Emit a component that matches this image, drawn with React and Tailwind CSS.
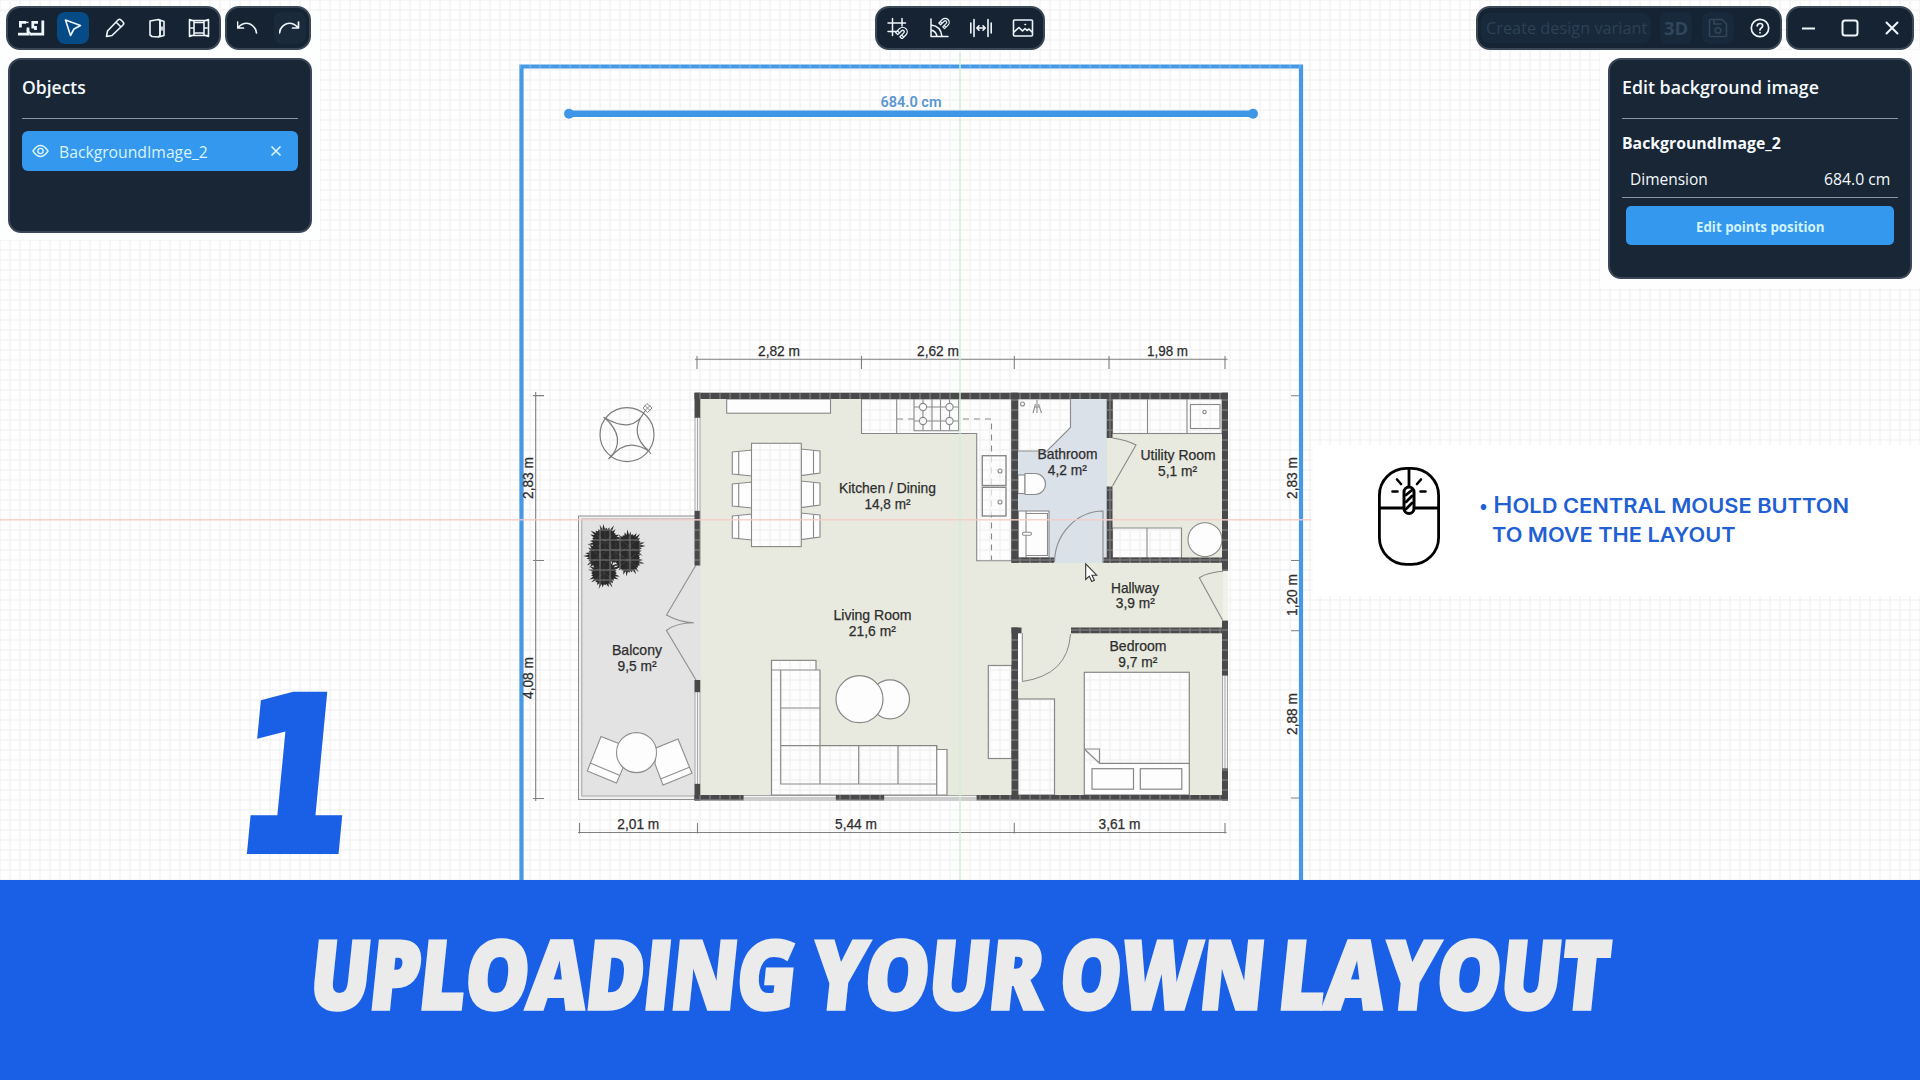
import React, { useLayoutEffect, useRef, useState } from 'react';

/* Text squeezed or stretched horizontally to a given width. */
function Fit({ w, className = '', children }) {
  const ref = useRef(null);
  const [s, setS] = useState(1);
  useLayoutEffect(() => {
    const n = ref.current.offsetWidth;
    if (n) setS(w / n);
  }, [w]);
  return (
    <span className="inline-block shrink-0 whitespace-nowrap" style={{ width: w }}>
      <span ref={ref} className={'inline-block origin-left whitespace-nowrap ' + className} style={{ transform: `scaleX(${s})` }}>
        {children}
      </span>
    </span>
  );
}

function Icon({ size = 22, sw = 1.6, children }) {
  return (
    <svg width={size} height={size} viewBox="0 0 22 22" fill="none" stroke="#eef6fb" strokeWidth={sw} strokeLinecap="round" strokeLinejoin="round">
      {children}
    </svg>
  );
}

function Cell({ on, dim, children }) {
  return (
    <div className="flex h-8 w-[42px] shrink-0 items-center justify-center">
      <div className={'flex h-8 w-8 items-center justify-center rounded-lg ' + (on ? 'bg-[#064a86]' : dim ? 'bg-[#1b2a3a]' : '')}>{children}</div>
    </div>
  );
}

function Bar({ className = '', children }) {
  return (
    <div className={'flex h-11 shrink-0 items-center rounded-[14px] border-2 border-[#3a4757] bg-[#152332] ' + className}>{children}</div>
  );
}

function Walls() {
  const walls = [
    [694.5, 392.7, 533.5, 6.3], [694.5, 392.7, 5.8, 25], [694.5, 511, 5.8, 54.5], [694.5, 680, 5.8, 12], [694.5, 784, 5.8, 16.5],
    [694.5, 795, 49, 5.5], [836, 795, 48, 5.5], [976.7, 795, 251.3, 5.5],
    [1222, 392.7, 6, 178], [1222, 620.5, 6, 55], [1222, 768.5, 6, 32],
    [1011.5, 392.7, 6.5, 170], [1011.5, 557.5, 42.5, 5.3], [1103.5, 557.5, 119, 5.3],
    [1106.7, 399, 5.8, 39], [1106.7, 486.5, 5.8, 76],
    [1011.5, 627.5, 10, 5.8], [1071, 627.5, 151, 5.8], [1011.5, 627.5, 6.5, 170],
  ];
  return <g fill="#49494b">{walls.map(([x, y, w, h], i) => <rect key={i} x={x} y={y} width={w} height={h} />)}</g>;
}

function Plant() {
  const bushes = [[605, 541, 18], [629, 546, 17], [600, 556, 17], [628, 560, 17], [604, 573, 17], [616, 552, 15]];
  return (
    <g>
      {bushes.map(([cx, cy, r], i) => {
        const pts = [];
        for (let k = 0; k < 60; k++) {
          const a = (k / 60) * Math.PI * 2;
          const rr = k % 2 ? r * 0.66 : r * (0.86 + 0.14 * Math.sin(k * 2.3 + i));
          pts.push(`${(cx + rr * Math.cos(a)).toFixed(1)},${(cy + rr * Math.sin(a)).toFixed(1)}`);
        }
        return <polygon key={i} points={pts.join(' ')} fill="#2a2a2a" />;
      })}
      <g stroke="#484848" strokeWidth="0.6">
        {bushes.map(([cx, cy], i) => <path key={i} d={`M${cx - 8} ${cy - 6}l16 12M${cx + 8} ${cy - 6}l-16 12M${cx} ${cy - 10}v20`} />)}
      </g>
    </g>
  );
}

const labels = [
  ['2,82 m', 779, 356.4, 42], ['2,62 m', 938, 356.4, 42], ['1,98 m', 1167.5, 356.4, 41],
  ['2,01 m', 638.3, 828.5, 42], ['5,44 m', 856, 828.5, 42], ['3,61 m', 1119.5, 828.5, 42],
  ['Kitchen / Dining', 887.5, 493, 97], ['14,8 m²', 887.5, 508.7, 46],
  ['Bathroom', 1067.5, 459, 60], ['4,2 m²', 1067.3, 475, 39],
  ['Utility Room', 1178, 460, 75], ['5,1 m²', 1177.5, 475.8, 39],
  ['Hallway', 1135, 592.7, 48], ['3,9 m²', 1135.3, 608, 39],
  ['Bedroom', 1138, 651, 57], ['9,7 m²', 1137.8, 666.5, 39],
  ['Living Room', 872.5, 620.2, 78], ['21,6 m²', 872.3, 636, 47],
  ['Balcony', 637, 655.4, 50], ['9,5 m²', 637, 671, 39],
];
const sideLabels = [['2,83 m', 533, 478], ['4,08 m', 533, 678], ['2,83 m', 1297, 478], ['1,20 m', 1297, 595], ['2,88 m', 1297, 714]];

function Plan() {
  return (
    <svg className="absolute left-0 top-0" width="1920" height="1081" viewBox="0 0 1920 1081" fill="none">
      <defs>
        <pattern id="grid" width="10" height="10" patternUnits="userSpaceOnUse" x="-5" y="-5">
          <path d="M5 0V10M0 5H10" stroke="#b9b9bd" strokeOpacity="0.16" strokeWidth="1.6" />
        </pattern>
        <pattern id="gridDark" width="10" height="10" patternUnits="userSpaceOnUse" x="-5" y="-5">
          <path d="M5 0V10M0 5H10" stroke="#e4e4e4" strokeOpacity="0.3" strokeWidth="1.4" />
        </pattern>
      </defs>
      <rect width="1920" height="1081" fill="#fefefe" />
      <rect width="1920" height="881" fill="url(#grid)" />

      {/* floors */}
      <rect x="578.5" y="516" width="117" height="283.5" fill="#f0f0f0" stroke="#8d8d8d" />
      <rect x="581.8" y="519" width="114" height="277" fill="#e3e3e4" stroke="#a5a5a5" />
      <rect x="695" y="395" width="532" height="404" fill="#e8eadf" />
      <rect x="695" y="565" width="5.5" height="115" fill="#e3e3e4" />
      <path d="M1018 399H1107V558H1103V563H1054V558H1018Z" fill="#dae1e8" />

      {/* windows */}
      <g fill="#f4f4f4" stroke="#a6a6a6">
        <path d="M695 417H700V511H695ZM697.5 417V511M695 692H700V784H695ZM697.5 692V784M743 795.5H836V800H743ZM884 795.5H977V800H884ZM743 798H836M884 798H977M1222.5 675H1227.5V769H1222.5ZM1225 675V769" />
      </g>

      {/* kitchen and dining */}
      <g fill="#fdfdfd" stroke="#878787" strokeWidth="1.1">
        <rect x="726.7" y="399" width="103.8" height="14.2" />
        <path d="M861.5 399V433.5H976.7V560.7H1011.5V399ZM896.7 399V433.5" />
        <path d="M897 419H991.5V560" strokeDasharray="6 5" fill="none" />
        <rect x="914" y="399" width="44.7" height="31.7" />
        <path d="M932 399V430M940.5 399V430M923 399V430M949.5 399V430M914 407H958M914 421H958" />
        {[[923, 407], [949.5, 407], [923, 421], [949.5, 421]].map(([x, y]) => <circle key={x + '-' + y} cx={x} cy={y} r="3.6" />)}
        <rect x="982.3" y="455.7" width="23.7" height="29.8" fillOpacity="0.7" strokeWidth="1.4" />
        <rect x="982.3" y="487.3" width="23.7" height="28.7" fillOpacity="0.7" strokeWidth="1.4" />
        <circle cx="1000" cy="471" r="2" /><circle cx="1000" cy="502" r="2" />
        {[451, 483, 515].map((y) => (
          <g key={y}>
            <path d={`M732.3 ${y + 1}L752 ${y - 1}V${y + 25}L732.3 ${y + 23}ZM738.7 ${y + 0.5}V${y + 23.5}`} />
            <path d={`M820 ${y}L801 ${y - 2}V${y + 24.5}L820 ${y + 22}ZM813.5 ${y - 0.5}V${y + 22.5}`} />
          </g>
        ))}
        <rect x="751.5" y="443.3" width="49.8" height="103.3" />
      </g>

      {/* living room */}
      <g fill="#fdfdfd" stroke="#878787" strokeWidth="1.2">
        <path d="M771.5 660.3H816V670H820V745.7H936.7V749.5H947V795H771.5Z" />
        <path d="M771.5 670H816M780.7 670V784H936.7M780.7 708H820M780.7 745.7H820M820 745.7V784M858.7 745.7V784M898 745.7V784M936.7 745.7V795" fill="none" />
        <circle cx="890" cy="699.3" r="19.5" />
        <circle cx="859.5" cy="699.2" r="23.5" />
        <rect x="988.3" y="665.5" width="23.5" height="93" />
      </g>

      {/* balcony */}
      <g fill="#fdfdfd" stroke="#8f8f8f" strokeWidth="1.1">
        <path d="M601 736.5L620 744L623 768L616.5 783L587.3 771ZM590.3 763L620 775.5" />
        <path d="M678 739L692 773.3L663 785L655 764L656 748ZM690 767L660.5 779" />
        <circle cx="636.5" cy="752.6" r="20" />
        <path d="M696 565L666.5 615Q680 622.5 694 622.7Q675 623 666.5 630.5L696 680" fill="none" />
      </g>
      <Plant />
      <g stroke="#7d7d7d" strokeWidth="1.2">
        <circle cx="627" cy="434.6" r="27" />
        <path d="M605 418Q633 434 644 412.5Q628 434 649.5 451.5Q627 436 610.5 457.5Q627 438 605 418M603.5 417L607 420M641 417L645 411M647 449L651 454M608.5 459L613 454" />
        <path d="M643 408L647 403.5L652 408L647.5 412.5ZM645 405.5L650 410.5M650 405.5L645 410.5" strokeWidth="0.9" />
      </g>

      {/* bathroom */}
      <g fill="#fdfdfd" stroke="#8b8b8b" strokeWidth="1.1">
        <path d="M1018 399H1070.5V427.5L1047 451H1018Z" />
        <circle cx="1022.5" cy="404" r="2" />
        <path d="M1037 400V413M1035.5 404L1033 413M1038.5 404L1041.5 413M1035 407H1039" fill="none" />
        <rect x="1018" y="475" width="7" height="18.5" />
        <path d="M1025 473.5H1035A10.5 10.5 0 0 1 1035 494.5H1025Z" />
        <rect x="1018.5" y="511" width="30.5" height="47" />
        <path d="M1026 511V558M1026 513.5H1047.5V555.5H1026" />
        <rect x="1022.5" y="532.3" width="9" height="3" rx="1.5" />
        <path d="M1103 563V511A49 52 0 0 0 1054.5 562" fill="none" />
      </g>

      {/* utility room and hallway */}
      <g fill="#fdfdfd" stroke="#878787" strokeWidth="1.1">
        <rect x="1112.5" y="399" width="109.5" height="34.5" />
        <path d="M1147.5 399V433.5M1187 399V433.5" />
        <rect x="1190.5" y="404.5" width="29.5" height="24" />
        <circle cx="1204.5" cy="412" r="1.7" />
        <path d="M1112.5 528H1181.5V558H1112.5ZM1147 528V558" />
        <circle cx="1205" cy="539.7" r="17" />
        <path d="M1112.5 438Q1127 440 1136 445L1112.5 486M1226 571Q1208 572 1199.3 577.7L1222.5 620" fill="none" />
        <rect x="1223" y="571" width="5" height="49.5" fill="#f0f1ea" stroke="none" />
      </g>

      {/* bedroom */}
      <g fill="#fdfdfd" stroke="#878787" strokeWidth="1.2">
        <path d="M1018 633H1022.3V682H1018Z" stroke="none" />
        <path d="M1022.3 633V681.5Q1068 675 1070.5 634" fill="none" strokeWidth="1" />
        <rect x="1018" y="699" width="36.5" height="96" />
        <rect x="1084.3" y="672.3" width="105" height="122.7" />
        <path d="M1084.3 749H1099.5V763.3H1189.3M1084.3 749L1099.5 763.3" fill="none" />
        <rect x="1092" y="768.7" width="41.5" height="20.5" />
        <rect x="1140.3" y="768.7" width="41.5" height="20.5" />
      </g>
      <Walls />

      {/* dimension chains */}
      <path
        d="M695 359.3H1227.5M697 356V369M861.5 356V369M1014.3 356V369M1109 356V369M1225 356V369M578 832.5H1226.5M579.5 823V833.5M697.5 823V833.5M1014.3 823V833.5M1225 823V833.5M535.7 392V801M533 395.6H544M533 560.5H544M533 798.5H544M1291 395.7H1299M1291 560.5H1299M1291 630.7H1299M1291 798H1299"
        stroke="#7f7f7f" strokeWidth="1.1"
      />

      <path d="M521.5 881V66.5H1301V881" stroke="#4599e6" strokeWidth="4.2" />
      <g fill="#2d2d2d" stroke="#2d2d2d" strokeWidth="0.25" fontFamily="Liberation Sans, Arial, sans-serif" fontSize="14.3" textAnchor="middle">
        {labels.map(([t, x, y, w]) => <text key={t + x} x={x} y={y} textLength={w} lengthAdjust="spacingAndGlyphs">{t}</text>)}
        {sideLabels.map(([t, x, y]) => (
          <text key={t + x + y} transform={`translate(${x} ${y}) rotate(-90)`} textLength="42" lengthAdjust="spacingAndGlyphs">{t}</text>
        ))}
      </g>

      {/* grid seen through furniture, walls and frame */}
      <path
        d="M861.5 399H1011V560H977V433.5H861.5ZM1018 399H1070V428L1047 451H1018ZM1112 399H1222V433H1112ZM752 443H801V546H752ZM772 660H820V746H937V795H772ZM1084 672H1189V765H1084ZM988 665H1012V758H988ZM1018 699H1054V795H1018ZM1112 528H1181V558H1112Z"
        fill="url(#grid)"
      />
      <path d="M694.5 392.7H1228V399H694.5ZM694.5 795H744V800.5H694.5ZM836 795H884V800.5H836ZM976 795H1228V800.5H976ZM1018 557.5H1054V563H1018ZM1103 557.5H1222V563H1103ZM1071 627.5H1222V633.5H1071ZM520 64.5H1303V68.5H520ZM1011.5 399H1018V563H1011.5ZM1011.5 633H1018V795H1011.5ZM1106.7 399H1112.5V438H1106.7ZM1106.7 486H1112.5V558H1106.7ZM1222 399H1228V570H1222ZM1222 620H1228V675H1222ZM1222 768H1228V795H1222ZM694.5 511H700V565H694.5ZM583 524H646V590H583Z" fill="url(#gridDark)" />
      <rect x="0" y="12" width="320" height="228" fill="#fdfefe" />
      <rect x="1600" y="50" width="320" height="238" fill="#fefefe" />
      <path d="M0 519.7H1311" stroke="#f6cbc6" strokeOpacity="0.85" strokeWidth="1.5" />
      <path d="M960 52V881" stroke="#cdf0cd" strokeOpacity="0.9" strokeWidth="1.4" />

      {/* measured span */}
      <path d="M568.5 113.8H1253" stroke="#3f96e6" strokeWidth="6.5" />
      <circle cx="569" cy="113.8" r="5" fill="#3f96e6" /><circle cx="1253" cy="113.8" r="5" fill="#3f96e6" />
      <text x="911" y="107.3" textAnchor="middle" textLength="61" lengthAdjust="spacingAndGlyphs" fill="#5a96d0" fontFamily="Roboto, sans-serif" fontSize="14" fontWeight="600">684.0 cm</text>

      <path d="M1085.7 563.8V579.5L1089.3 576.2L1091.8 581.5L1094.4 580.3L1092 575.2H1096.7Z" fill="#fff" stroke="#333" strokeWidth="1.1" />
    </svg>
  );
}

function Header() {
  return (
    <header className="relative flex h-[56px] items-start pl-[6px] pt-[6px]">
      <Bar className="w-[215px] pl-[2px]">
        <Cell>
          <svg className="shrink-0" width="27" height="17" viewBox="0 0 27 17" fill="none" stroke="#eef6fb" strokeWidth="2.8">
            <path d="M8 2.4H2.4V7.5M0 14.2H10V7.500" />
            <path d="M6 2.4H10.500" strokeWidth="1.500" />
            <path d="M20 2.4H14.8V8.5M11.500 14.2H24.8V0.5M17.500 6V10" />
            <path d="M9 10L14 15" strokeWidth="1.6" />
          </svg>
        </Cell>
        <Cell on><Icon><path d="M3.5 3L18.5 8.5L12 12L8.5 18.5Z" /></Icon></Cell>
        <Cell><Icon><path d="M2.5 19.5L3.5 14L14 3Q15.5 1.5 17 3L19 5Q20.5 6.5 19 8L8 18.5ZM12 5L17 10" /></Icon></Cell>
        <Cell><Icon><path d="M4 4V18L6 19.5M4 4L12.5 2.5L14 4V18L12.5 20L6 19.5M12.5 2.5L18 4.5V18.5L12.5 20M16 10V13" /><path d="M14 4V18" /></Icon></Cell>
        <Cell><Icon><path d="M1.5 2.5V19.5L6 18V4L1.5 2.5ZM20.5 2.5V19.5L16 18V4L20.5 2.5ZM1.5 3.5H20.5M1.5 18.5H20.5M6 5.5H16M6 16H16M3 11H6M16 11H19" /></Icon></Cell>
      </Bar>
      <Bar className="ml-1 w-[86px]">
        <Cell><Icon sw={1.7}><path d="M0.5 5V11H6.5M1 10.5Q7 4.5 13 7Q19 10 19.5 16" /></Icon></Cell>
        <Cell dim><Icon sw={1.7}><path d="M19.5 5V11H13.5M19 10.5Q13 4.5 7 7Q1 10 0.5 16" /></Icon></Cell>
      </Bar>

      <Bar className="ml-[564px] w-[170px]">
        <Cell><Icon sw={1.5}><path d="M1 6H18.5M5.5 1.5V18.5M15 1.5V9M1 14.5H9" /><g transform="rotate(45 15 15.5)"><path d="M10.5 20V14.5A4.5 4.5 0 0 1 19.5 14.5V20H16.5V14.5A1.5 1.5 0 0 0 13.5 14.5V20ZM10.5 17.5H13.5M16.5 17.5H19.5" strokeWidth="1.3" /></g></Icon></Cell>
        <Cell><Icon sw={1.5}><path d="M2 2V19.5H19M2 8Q12 9 13 19.5M2 13Q7 14 8 19.5" /><g transform="rotate(45 15.5 6)"><path d="M11.5 10V5A4 4 0 0 1 19.5 5V10H17V5A1.5 1.5 0 0 0 14 5V10ZM11.5 8H14M17 8H19.5" strokeWidth="1.2" /></g></Icon></Cell>
        <div className="-ml-px"><Cell><Icon sw={1.6}><path d="M0.8 6V16M4 2.5V19.5M18 2.5V19.5M21.2 6V16M6.8 11H15.2M9 8.8L6.8 11L9 13.2M13 8.8L15.2 11L13 13.2" /></Icon></Cell></div>
        <Cell><Icon><rect x="1.5" y="3" width="19" height="16" rx="1" /><path d="M2 15L7 10.5L10.5 14L13 11.5L15 13.5L17 12L20 15M13 7.5H13.5" /></Icon></Cell>
      </Bar>

      <Bar className="ml-[431px] w-[306px] pl-[3px]">
        <div className="flex h-[30px] w-[170px] shrink-0 items-center justify-center rounded-lg bg-[#17293a]">
          <Fit w={161} className="font-['Open_Sans',sans-serif] text-[16.5px] leading-[28px] text-[#2c4257]">Create design variant</Fit>
        </div>
        <div className="ml-[9px] flex h-8 w-8 shrink-0 items-center justify-center rounded-lg bg-[#17293a]">
          <Fit w={24} className="font-['Open_Sans',sans-serif] text-[18.5px] font-bold leading-8 text-[#30465a]">3D</Fit>
        </div>
        <div className="ml-[10px] flex h-8 w-8 shrink-0 items-center justify-center rounded-lg bg-[#17293a]">
          <svg width="20" height="20" viewBox="0 0 20 20" fill="none" stroke="#30465a" strokeWidth="1.6"><path d="M1.5 2.5Q1.5 1.5 2.5 1.5H14L18.5 6V17.5Q18.5 18.5 17.5 18.5H2.5Q1.5 18.5 1.5 17.5ZM6 1.5V6H13.5" /><circle cx="10" cy="12.5" r="2.8" /></svg>
        </div>
        <div className="ml-[5px]"><Cell><Icon sw={1.7}><circle cx="11" cy="11" r="8.7" /><path d="M8.2 8.8Q8.5 6.5 11 6.5Q13.7 6.5 13.7 8.8Q13.7 10.2 12 11.2Q11 11.8 11 13M11 15.5V15.7" /></Icon></Cell></div>
      </Bar>
      <Bar className="ml-1 w-[128px]">
        <Cell><Icon sw={2}><path d="M4 11.5H17" strokeLinecap="butt" /></Icon></Cell>
        <div className="-ml-px"><Cell><Icon sw={2}><rect x="3.5" y="3.5" width="15" height="15" rx="2.5" /></Icon></Cell></div>
        <Cell><Icon sw={2}><path d="M5.5 5.5L16.5 16.5M16.5 5.5L5.5 16.5" /></Icon></Cell>
      </Bar>
    </header>
  );
}

const panel = "rounded-[13px] border-2 border-[#3a4757] bg-[#192635] px-3 font-['Open_Sans',sans-serif] text-[#f4fafd]";

export default function App() {
  return (
    <div className="relative flex h-[1081px] w-[1920px] flex-col overflow-hidden bg-white">
      <Plan />
      <Header />
      <div className="relative flex h-[389px] items-start justify-between pl-2 pr-2 pt-[2px]">
        <section className={'h-[175px] w-[304px] ' + panel}>
          <div className="flex h-[59px] items-center border-b border-[#8a95a1] pb-[3px]">
            <Fit w={64} className="text-[17.5px] font-semibold">Objects</Fit>
          </div>
          <div className="mt-3 flex h-10 items-center rounded-md bg-[#3498ee] pl-[10px] pr-4 text-[#d9f4ff]">
            <svg width="17" height="14" viewBox="0 0 17 14" fill="none" stroke="currentColor" strokeWidth="1.4"><path d="M1 7Q4.5 1.5 8.5 1.5Q12.5 1.5 16 7Q12.5 12.5 8.5 12.5Q4.5 12.5 1 7Z" /><circle cx="8.5" cy="7" r="2.6" /></svg>
            <div className="ml-[10px] flex flex-1 pt-[3px]"><Fit w={149} className="text-[15.5px]">BackgroundImage_2</Fit></div>
            <svg width="12" height="12" viewBox="0 0 12 12" stroke="currentColor" strokeWidth="1.7"><path d="M1.5 1.5L10.5 10.5M10.5 1.5L1.5 10.5" /></svg>
          </div>
        </section>
        <section className={'h-[221px] w-[304px] ' + panel}>
          <div className="flex h-[59px] items-center border-b border-[#8a95a1] pb-[3px]">
            <Fit w={197} className="text-[17.5px] font-semibold">Edit background image</Fit>
          </div>
          <div className="flex h-[44px] items-center pt-[4px]"><Fit w={159} className="text-[15.5px] font-bold">BackgroundImage_2</Fit></div>
          <div className="flex h-[35px] items-center justify-between border-b border-[#8a95a1] px-2 pb-[2px]">
            <Fit w={78} className="text-[15.5px]">Dimension</Fit>
            <Fit w={66} className="text-[15.5px]">684.0 cm</Fit>
          </div>
          <div className="mx-1 mt-2 flex h-[39px] items-center justify-center rounded-[5px] bg-[#3498ee] text-[#d3f3ff]">
            <Fit w={129} className="text-[13.5px] font-bold">Edit points position</Fit>
          </div>
        </section>
      </div>

      <div className="relative ml-[1313px] flex h-[151px] items-start bg-white pl-[65px] pt-[22px]">
        <svg width="62" height="99" viewBox="0 0 62 99" fill="none" stroke="#000" strokeWidth="2.8" strokeLinecap="round">
          <rect x="1.4" y="1.4" width="59.2" height="96" rx="27" />
          <path d="M2 41H60M31 2V20" />
          <path d="M19 12.5L23 17M43 12.5L39 17M14.5 24.5H19.5M42.5 24.5H47.5" strokeWidth="2.6" />
          <rect x="26" y="20" width="10" height="26.5" rx="5" fill="#fff" strokeWidth="3" />
          <path d="M28 28L34 23M28 35L34 29M28 42L34 36" strokeWidth="2.8" />
        </svg>
        <div className="ml-[39px] flex flex-col pt-[23px] font-['Inter',sans-serif] text-[19.5px] font-semibold leading-[29px] text-[#1f60d3]">
          <div className="flex items-baseline"><Fit w={9}>•</Fit><span className="ml-[5px]"><Fit w={356}><span className="text-[23.5px] font-medium">H</span>OLD CENTRAL MOUSE BUTTON</Fit></span></div>
          <div className="ml-[13px]"><Fit w={243}>TO MOVE THE LAYOUT</Fit></div>
        </div>
      </div>

      <div className="relative flex h-[284px] items-end pb-[26px] pl-[240px]">
        <Fit w={112} className="-mb-[52px] font-['DejaVu_Sans',sans-serif] text-[206px] font-bold leading-[258px] text-[#1960e7] [-webkit-text-stroke:12px_#1960e7]">
          <span className="inline-block -skew-x-[7deg]">1</span>
        </Fit>
      </div>

      <div className="relative flex h-[201px] items-start border-b border-white bg-[#1960e7] pl-[311px] pt-[24px] font-['Open_Sans',sans-serif] text-[95px] font-extrabold leading-[136px] tracking-[-1px] text-[#ebebeb] [-webkit-text-stroke:3.5px_#ebebeb]">
        <Fit w={485}><span className="inline-block -skew-x-[7deg]">UPLOADING</span></Fit>
        <span className="ml-[17px]"><Fit w={231}><span className="inline-block -skew-x-[7deg]">YOUR</span></Fit></span>
        <span className="ml-[17px]"><Fit w={204}><span className="inline-block -skew-x-[7deg]">OWN</span></Fit></span>
        <span className="ml-[15px]"><Fit w={329}><span className="inline-block -skew-x-[7deg]">LAYOUT</span></Fit></span>
      </div>
    </div>
  );
}
